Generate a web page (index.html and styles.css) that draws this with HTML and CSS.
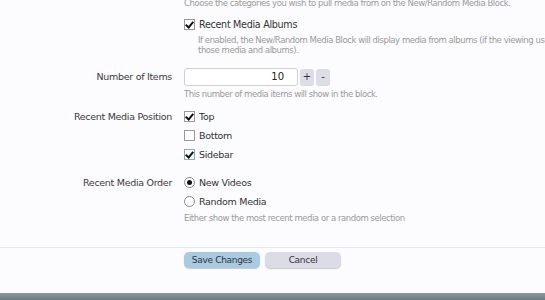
FILE: index.html
```html
<!DOCTYPE html>
<html>
<head>
<meta charset="utf-8">
<link rel="stylesheet" href="styles.css">
</head>
<body>
<div class="page">
  <form class="form">
    <div class="row">
      <div class="label"></div>
      <div class="field">
        <p class="hint hint-top">Choose the categories you wish to pull media from on the New/Random Media Block.</p>
        <label class="opt opt-albums"><span class="box checked"></span>Recent Media Albums</label>
        <p class="hint hint-indent">If enabled, the New/Random Media Block will display media from albums (if the viewing user can view<br>those media and albums).</p>
      </div>
    </div>

    <div class="row row-items">
      <div class="label label-input">Number of Items</div>
      <div class="field">
        <div class="spin">
          <span class="num">10</span>
          <span class="spin-btn">+</span>
          <span class="spin-btn">-</span>
        </div>
        <p class="hint hint-after">This number of media items will show in the block.</p>
      </div>
    </div>

    <div class="row row-pos">
      <div class="label label-opt">Recent Media Position</div>
      <div class="field">
        <label class="opt"><span class="box checked"></span>Top</label>
        <label class="opt"><span class="box"></span>Bottom</label>
        <label class="opt"><span class="box checked focus"></span>Sidebar</label>
      </div>
    </div>

    <div class="row row-order">
      <div class="label label-opt">Recent Media Order</div>
      <div class="field">
        <label class="opt"><span class="radio on"></span>New Videos</label>
        <label class="opt"><span class="radio"></span>Random Media</label>
        <p class="hint hint-after2">Either show the most recent media or a random selection</p>
      </div>
    </div>

    <div class="submit">
      <div class="label"></div>
      <div class="buttons">
        <span class="btn btn-primary">Save Changes</span>
        <span class="btn btn-cancel">Cancel</span>
      </div>
    </div>
  </form>
  <div class="footer-bar"></div>
</div>
</body>
</html>
```

FILE: styles.css
```css
html, body {
  margin: 0;
  padding: 0;
  background: #fcfcfe;
}
body {
  font-family: "DejaVu Sans", Verdana, sans-serif;
  color: #3c3c3c;
  overflow: hidden;
}
.page {
  height: 300px;
  display: flex;
  flex-direction: column;
  overflow: hidden;
}
.form {
  margin-top: -3px;
  flex: 1;
  display: flex;
  flex-direction: column;
}
.row, .submit {
  display: grid;
  grid-template-columns: 172px 1fr;
  column-gap: 12px;
}
.label {
  text-align: right;
  font-size: 9.5px;
  letter-spacing: -0.3px;
  color: #3a3a3a;
  white-space: nowrap;
}
.label-input { line-height: 18px; }
.label-opt { line-height: 19px; }
.field { min-width: 0; }
.hint {
  margin: 0;
  font-size: 8.5px;
  line-height: 11px;
  color: #9a9a9a;
  letter-spacing: -0.45px;
  white-space: nowrap;
}
.hint-top { line-height: 12px; }
.hint-indent {
  padding-left: 14px;
  margin-top: 2px;
  line-height: 10px;
}
.opt {
  display: flex;
  align-items: center;
  height: 19px;
  font-size: 9.5px;
  letter-spacing: -0.3px;
  color: #333;
  white-space: nowrap;
}
.opt-albums {
  margin-top: 7px;
  height: 17px;
  font-size: 9.6px;
}
.box {
  width: 9px;
  height: 9px;
  border: 1px solid #9a9a9a;
  background: #fff;
  margin-right: 4px;
  position: relative;
  flex: none;
}
.box.checked::after {
  content: "";
  position: absolute;
  left: 2px;
  top: 0px;
  width: 3px;
  height: 6px;
  border: solid #111;
  border-width: 0 2px 2px 0;
  transform: rotate(40deg);
}
.box.focus { border-color: #7fb0c8; }
.radio {
  width: 9px;
  height: 9px;
  border: 1px solid #8a8a8a;
  border-radius: 50%;
  background: #fff;
  margin-right: 4px;
  position: relative;
  flex: none;
}
.radio.on::after {
  content: "";
  position: absolute;
  left: 2px;
  top: 2px;
  width: 5px;
  height: 5px;
  border-radius: 50%;
  background: #111;
}
.row-items { margin-top: 13px; }
.spin {
  display: flex;
  align-items: center;
  height: 18px;
}
.num {
  box-sizing: border-box;
  width: 114px;
  height: 18px;
  border: 1px solid #cfcfd4;
  border-radius: 3px;
  background: #fff;
  text-align: right;
  padding-right: 13px;
  font-size: 10px;
  line-height: 16px;
  color: #222;
}
.spin-btn {
  width: 14px;
  height: 16px;
  margin-left: 2px;
  border-radius: 3px;
  background: #dcdde6;
  box-shadow: 0 1px 1px rgba(0,0,0,0.15);
  font-size: 10px;
  line-height: 15px;
  text-align: center;
  color: #333;
}
.hint-after { margin-top: 3px; }
.row-pos { margin-top: 7px; }
.row-order { margin-top: 9px; }
.hint-after2 { margin-top: 2px; }
.submit {
  margin-top: 23px;
  border-top: 1px solid #e6e8ec;
  padding-top: 4px;
}
.buttons {
  display: flex;
  gap: 5px;
}
.btn {
  width: 76px;
  height: 16px;
  border-radius: 5px;
  font-size: 9px;
  line-height: 16px;
  text-align: center;
  color: #333;
  letter-spacing: -0.3px;
  box-shadow: 0 1px 1px rgba(0,0,0,0.2);
}
.btn-primary { background: #a9cbe2; }
.btn-cancel { background: #dcdce6; }
.footer-bar {
  height: 7px;
  flex: none;
  background: linear-gradient(#8b9aa0, #6b7b80);
}
```
